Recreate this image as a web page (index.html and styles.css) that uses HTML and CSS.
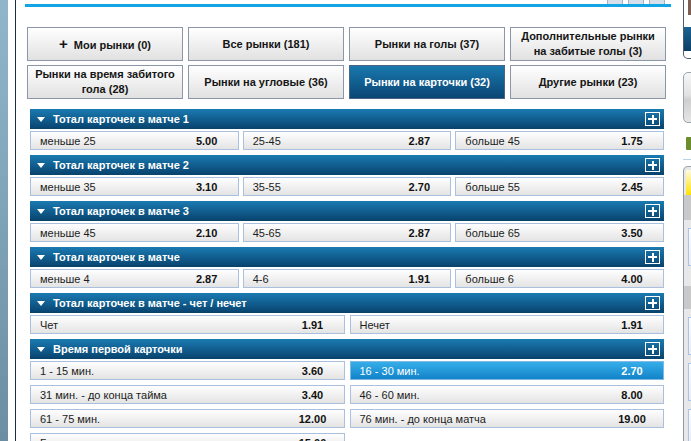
FILE: index.html
```html
<!doctype html>
<html>
    <head>
        <title>Рынки на карточки</title>
        <meta charset="utf-8">
        <link rel="stylesheet" href="styles.css">
    </head>

    <body>
        <div class="page">
            <div class="rail"></div>
            <div class="edge"></div>

            <main class="main">
                <div class="topbar">
                    <span class="tool"></span><span class="tool"></span><span class="tool"></span>
                </div>

                <nav class="filters">
                    <button class="filter"><span><b class="filter-plus">+</b>Мои рынки (0)</span></button>
                    <button class="filter"><span>Все рынки (181)</span></button>
                    <button class="filter"><span>Рынки на голы (37)</span></button>
                    <button class="filter"><span>Дополнительные рынки<br>на забитые голы (3)</span></button>
                    <button class="filter"><span>Рынки на время забитого<br>гола (28)</span></button>
                    <button class="filter"><span>Рынки на угловые (36)</span></button>
                    <button class="filter active"><span>Рынки на карточки (32)</span></button>
                    <button class="filter"><span>Другие рынки (23)</span></button>
                </nav>

                <div class="markets">
                    <section class="market">
                        <div class="market-head"><span class="caret"></span>Тотал карточек в матче 1<span class="expand"></span></div>
                        <div class="odds cols-3">
                            <div class="cell"><span class="label">меньше 25</span><span class="price">5.00</span></div>
                            <div class="cell"><span class="label">25-45</span><span class="price">2.87</span></div>
                            <div class="cell"><span class="label">больше 45</span><span class="price">1.75</span></div>
                        </div>
                    </section>

                    <section class="market">
                        <div class="market-head"><span class="caret"></span>Тотал карточек в матче 2<span class="expand"></span></div>
                        <div class="odds cols-3">
                            <div class="cell"><span class="label">меньше 35</span><span class="price">3.10</span></div>
                            <div class="cell"><span class="label">35-55</span><span class="price">2.70</span></div>
                            <div class="cell"><span class="label">больше 55</span><span class="price">2.45</span></div>
                        </div>
                    </section>

                    <section class="market">
                        <div class="market-head"><span class="caret"></span>Тотал карточек в матче 3<span class="expand"></span></div>
                        <div class="odds cols-3">
                            <div class="cell"><span class="label">меньше 45</span><span class="price">2.10</span></div>
                            <div class="cell"><span class="label">45-65</span><span class="price">2.87</span></div>
                            <div class="cell"><span class="label">больше 65</span><span class="price">3.50</span></div>
                        </div>
                    </section>

                    <section class="market">
                        <div class="market-head"><span class="caret"></span>Тотал карточек в матче<span class="expand"></span></div>
                        <div class="odds cols-3">
                            <div class="cell"><span class="label">меньше 4</span><span class="price">2.87</span></div>
                            <div class="cell"><span class="label">4-6</span><span class="price">1.91</span></div>
                            <div class="cell"><span class="label">больше 6</span><span class="price">4.00</span></div>
                        </div>
                    </section>

                    <section class="market">
                        <div class="market-head"><span class="caret"></span>Тотал карточек в матче - чет / нечет<span class="expand"></span></div>
                        <div class="odds cols-2">
                            <div class="cell"><span class="label">Чет</span><span class="price">1.91</span></div>
                            <div class="cell"><span class="label">Нечет</span><span class="price">1.91</span></div>
                        </div>
                    </section>

                    <section class="market">
                        <div class="market-head"><span class="caret"></span>Время первой карточки<span class="expand"></span></div>
                        <div class="odds cols-2">
                            <div class="cell"><span class="label">1 - 15 мин.</span><span class="price">3.60</span></div>
                            <div class="cell selected"><span class="label">16 - 30 мин.</span><span class="price">2.70</span></div>
                            <div class="cell"><span class="label">31 мин. - до конца тайма</span><span class="price">3.40</span></div>
                            <div class="cell"><span class="label">46 - 60 мин.</span><span class="price">8.00</span></div>
                            <div class="cell"><span class="label">61 - 75 мин.</span><span class="price">12.00</span></div>
                            <div class="cell"><span class="label">76 мин. - до конца матча</span><span class="price">19.00</span></div>
                            <div class="cell"><span class="label">Без карточек</span><span class="price">15.00</span></div>
                        </div>
                    </section>
                </div>
            </main>

            <aside class="side">
                <div class="side-top">
                    <div class="side-photo"></div>
                    <div class="side-banner"></div>
                </div>
                <div class="side-box"></div>
                <div class="side-icon"></div>
                <div class="side-rule"></div>
                <div class="slip">
                    <div class="slip-head"></div>
                    <div class="slip-band"></div>
                    <div class="slip-item"></div>
                    <div class="slip-band second"></div>
                    <div class="slip-item"></div>
                    <div class="slip-item"></div>
                    <div class="slip-item"></div>
                </div>
            </aside>
        </div>
    </body>
</html>
```

FILE: styles.css
```css
html, body {
    margin: 0;
    height: 100%;
    overflow: hidden;
    background: #fff;
}
body {
    font-family: "Liberation Sans", Arial, sans-serif;
    font-size: 11px;
    color: #1c1c1c;
}
.page {
    display: flex;
    height: 441px;
}
.rail {
    flex: none;
    width: 8px;
    margin-right: 7px;
    background: linear-gradient(#91b6cb, #6c8ea2);
}
.edge {
    flex: none;
    width: 1px;
    background: #1c2d45;
}

/* main column */
.main {
    flex: none;
    width: 646px;
    margin-left: 9px;
}
.topbar {
    display: flex;
    justify-content: flex-end;
    gap: 5px;
    height: 4px;
    padding-right: 6px;
    border-bottom: 3px solid #12a5e4;
    overflow: hidden;
}
.tool {
    width: 14px;
    height: 10px;
    margin-top: -6px;
    border: 1px solid #9fb2c6;
    border-radius: 2px;
    background: #d5e0ea;
}

.filters {
    display: grid;
    grid-template-columns: repeat(4, 1fr);
    grid-auto-rows: 34px;
    gap: 4px 5px;
    margin: 20px 5px 0 2px;
}
.filter {
    padding: 0 2px;
    border: 1px solid #8b97a8;
    background: linear-gradient(#ffffff, #e1e1e1);
    font-family: inherit;
    font-size: 11px;
    font-weight: bold;
    line-height: 15px;
    color: #151515;
    text-align: center;
    white-space: nowrap;
}
.filter-plus {
    font-size: 15px;
    margin-right: 6px;
}
.filter.active {
    border-color: #4b6684;
    background: linear-gradient(#1978ae, #0a4674);
    color: #fff;
}

/* markets */
.markets {
    margin: 10px 7px 0 5px;
}
.market {
    margin-bottom: 5px;
}
.market-head {
    display: flex;
    align-items: center;
    height: 20px;
    padding-left: 7px;
    background: linear-gradient(#1a7bb2, #08426d);
    color: #fff;
    font-weight: bold;
}
.caret {
    width: 0;
    height: 0;
    margin-right: 8px;
    border-left: 4px solid transparent;
    border-right: 4px solid transparent;
    border-top: 5px solid #fff;
}
.expand {
    position: relative;
    box-sizing: border-box;
    width: 15px;
    height: 14px;
    margin-left: auto;
    margin-right: 4px;
    border: 1px solid #fff;
}
.expand::before,
.expand::after {
    content: "";
    position: absolute;
    background: #fff;
}
.expand::before {
    left: 2px;
    top: 5px;
    width: 9px;
    height: 2px;
}
.expand::after {
    left: 5.5px;
    top: 1.5px;
    width: 2px;
    height: 9px;
}

.odds {
    display: grid;
    row-gap: 5px;
    margin-top: 2px;
}
.cols-3 {
    grid-template-columns: repeat(3, 1fr);
    column-gap: 4px;
}
.cols-2 {
    grid-template-columns: repeat(2, 1fr);
    column-gap: 5px;
}
.cell {
    display: flex;
    align-items: center;
    box-sizing: border-box;
    height: 19px;
    padding-left: 9px;
    border: 1px solid #a9c1de;
    background: linear-gradient(#fefefe, #e4e4e4);
    white-space: nowrap;
}
.label {
    flex: 1;
}
.price {
    width: 42px;
    margin-right: 10px;
    font-weight: bold;
    text-align: center;
    color: #111;
}
.cell.selected {
    border-color: #7fb9e3;
    background: linear-gradient(#36aee9, #1283c8);
    color: #fff;
}
.cell.selected .price {
    color: #fff;
}

/* right column */
.side {
    flex: none;
    width: 200px;
    margin-left: 11px;
}
.side-top {
    box-sizing: border-box;
    height: 59px;
    margin-left: 1px;
    border: 1px solid #4d5d6e;
    border-top: none;
    border-radius: 0 0 0 5px;
    background: #fff;
}
.side-photo {
    width: 30px;
    height: 15px;
    margin-left: 4px;
    background: #7c5e54;
}
.side-banner {
    height: 24px;
    margin-top: 12px;
    background: linear-gradient(#1b6394, #0a3e66);
}
.side-box {
    box-sizing: border-box;
    height: 51px;
    margin: 13px 0 0 1px;
    border: 1px solid #9ba5ae;
    border-radius: 5px;
    background: linear-gradient(#f6f6f6, #e2e2e2 45%, #cfcfcf 55%, #e6e6e6);
}
.side-icon {
    width: 6px;
    height: 13px;
    margin: 14px 0 0 4px;
    border-radius: 1px;
    background: #6c8d2c;
}
.side-rule {
    height: 1px;
    margin: 9px 0 0 1px;
    background: #b7d3e8;
}
.slip {
    box-sizing: border-box;
    height: 300px;
    margin: 6px 0 0 1px;
    padding-top: 3px;
    border-left: 1px solid #8d9aa6;
    border-top: 1px solid #9ba5ae;
    border-top-left-radius: 5px;
    background: #e8e8e8;
}
.slip-head {
    height: 25px;
    margin-left: 2px;
    background: linear-gradient(#fffbe2, #ffe200);
}
.slip-band {
    height: 25px;
    background: #c9c9c9;
}
.slip-band.second {
    height: 23px;
    margin-top: 20px;
}
.slip-item {
    box-sizing: border-box;
    height: 38px;
    margin: 8px 0 0 4px;
    border: 1px solid #a9c4e6;
    background: linear-gradient(#fcfcfc, #ececec);
}
```
